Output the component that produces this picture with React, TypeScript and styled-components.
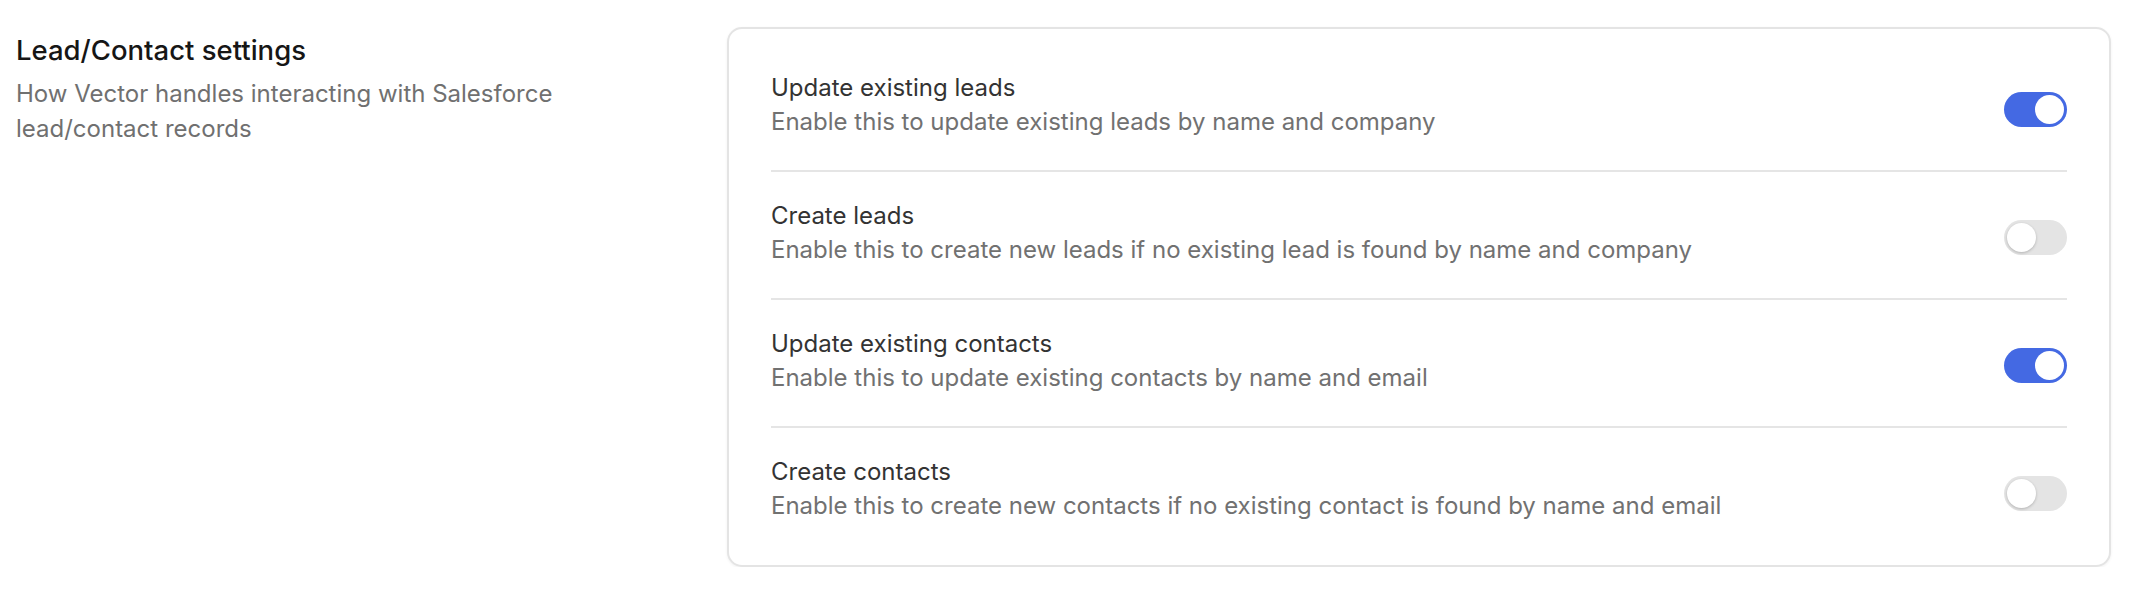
import React, { useState } from 'react';
import styled, { createGlobalStyle } from 'styled-components';

const GlobalStyle = createGlobalStyle`
  html, body {
    margin: 0;
    padding: 0;
    background: #ffffff;
  }
  body {
    font-family: Inter, 'Noto Sans', 'Liberation Sans', sans-serif;
    -webkit-font-smoothing: antialiased;
  }
`;

type Setting = {
  id: string;
  title: string;
  description: string;
  enabled: boolean;
};

const initialSettings: Setting[] = [
  {
    id: 'update-leads',
    title: 'Update existing leads',
    description: 'Enable this to update existing leads by name and company',
    enabled: true,
  },
  {
    id: 'create-leads',
    title: 'Create leads',
    description:
      'Enable this to create new leads if no existing lead is found by name and company',
    enabled: false,
  },
  {
    id: 'update-contacts',
    title: 'Update existing contacts',
    description: 'Enable this to update existing contacts by name and email',
    enabled: true,
  },
  {
    id: 'create-contacts',
    title: 'Create contacts',
    description:
      'Enable this to create new contacts if no existing contact is found by name and email',
    enabled: false,
  },
];

const App = () => {
  const [settings, setSettings] = useState<Setting[]>(initialSettings);

  const toggle = (id: string) => {
    setSettings(prev =>
      prev.map(s => (s.id === id ? { ...s, enabled: !s.enabled } : s)),
    );
  };

  return (
    <>
      <GlobalStyle />
      <Page>
        <Intro>
          <Heading>Lead/Contact settings</Heading>
          <Lead>How Vector handles interacting with Salesforce lead/contact records</Lead>
        </Intro>
        <Card>
          {settings.map(setting => (
            <Row key={setting.id}>
              <RowText>
                <RowTitle>{setting.title}</RowTitle>
                <RowDescription>{setting.description}</RowDescription>
              </RowText>
              <Switch
                type="button"
                role="switch"
                aria-checked={setting.enabled}
                $on={setting.enabled}
                onClick={() => toggle(setting.id)}
              >
                <Knob $on={setting.enabled} />
              </Switch>
            </Row>
          ))}
        </Card>
      </Page>
    </>
  );
};

export default App;

const Page = styled.div`
  display: grid;
  grid-template-columns: 695px 1fr;
  column-gap: 16px;
  align-items: start;
  padding: 27px 19px 0 16px;
`;

const Intro = styled.div`
  display: flex;
  flex-direction: column;
  padding-top: 7px;
`;

const Heading = styled.h2`
  margin: 0;
  font-size: 27.5px;
  line-height: 32px;
  font-weight: 500;
  color: #161616;
`;

const Lead = styled.p`
  margin: 10px 0 0;
  max-width: 600px;
  font-size: 24px;
  line-height: 35px;
  color: #707070;
`;

const Card = styled.div`
  border: 2px solid #e4e4e4;
  border-radius: 15px;
  background: #fff;
  box-shadow: 0 1px 3px rgba(0, 0, 0, 0.06);
  padding: 15px 42px 11px;
`;

const Row = styled.div`
  display: flex;
  align-items: center;
  justify-content: space-between;
  gap: 24px;
  padding: 31px 0 27px;
  border-bottom: 2px solid #e5e5e5;

  &:last-child {
    border-bottom: none;
  }
`;

const RowText = styled.div`
  display: flex;
  flex-direction: column;
`;

const RowTitle = styled.div`
  font-size: 24px;
  line-height: 26px;
  margin-bottom: 4px;
  color: #333333;
`;

const RowDescription = styled.div`
  font-size: 24px;
  line-height: 34px;
  padding-bottom: 4px;
  color: #717171;
`;

const Switch = styled.button<{ $on: boolean }>`
  position: relative;
  flex: none;
  width: 63px;
  height: 35px;
  padding: 0;
  border: none;
  border-radius: 18px;
  cursor: pointer;
  background: ${({ $on }) => ($on ? '#4469e3' : '#e4e4e4')};
`;

const Knob = styled.span<{ $on: boolean }>`
  position: absolute;
  top: 3px;
  left: ${({ $on }) => ($on ? '31px' : '3px')};
  width: 29px;
  height: 29px;
  border-radius: 50%;
  background: #ffffff;
  box-shadow: ${({ $on }) =>
    $on ? 'none' : '0 1px 3px rgba(0, 0, 0, 0.22)'};
`;
